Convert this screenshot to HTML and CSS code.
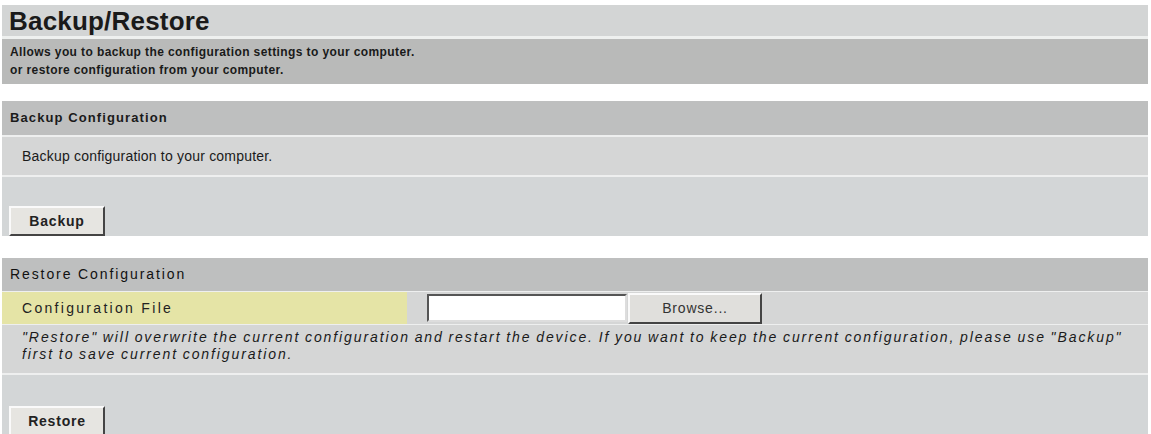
FILE: index.html
```html
<!DOCTYPE html>
<html>
<head>
	<title>Backup/Restore</title>
	<link rel="stylesheet" href="styles.css">
</head>
<body>
	<div class="page">
		<h1 class="title">Backup/Restore</h1>
		<div class="intro">
			Allows you to backup the configuration settings to your computer.<br>
			or restore configuration from your computer.
		</div>

		<div class="section">
			<div class="head">Backup Configuration</div>
			<div class="row tall">Backup configuration to your computer.</div>
			<div class="actions short">
				<button class="btn">Backup</button>
			</div>
		</div>

		<div class="section">
			<div class="head light">Restore Configuration</div>
			<div class="row field">
				<label class="label" for="cfgfile">Configuration File</label>
				<div class="file">
					<input type="text" id="cfgfile" class="filebox">
					<button class="browse">Browse...</button>
				</div>
			</div>
			<div class="row note">
				"Restore" will overwrite the current configuration and restart the device. If you want to keep the current configuration, please use "Backup" first to save current configuration.
			</div>
			<div class="actions">
				<button class="btn">Restore</button>
			</div>
		</div>
	</div>
</body>
</html>
```

FILE: styles.css
```css
body{
	margin: 0;
	background: #fff;
	font-family: "Liberation Sans", Arial, sans-serif;
	color: #1a1a1a;
}
.page{
	margin: 5px 3px 0 2px;
	width: 1146px;
}
.title{
	margin: 0;
	height: 31px;
	line-height: 32px;
	padding-left: 7px;
	font-size: 26px;
	font-weight: bold;
	letter-spacing: 0.2px;
	background: #d3d5d5;
	border-bottom: 3px solid #eef0ef;
}
.intro{
	background: #b9bab9;
	padding: 4px 8px 0;
	height: 41px;
	font-size: 12px;
	font-weight: bold;
	line-height: 18px;
	letter-spacing: 0.4px;
}
.section{
	margin-top: 17px;
}
.section + .section{
	margin-top: 22px;
}
.head{
	background: #bebfbf;
	height: 34px;
	line-height: 34px;
	padding-left: 8px;
	font-size: 13px;
	font-weight: bold;
	letter-spacing: 1.1px;
	border-bottom: 2px solid #eeefef;
}
.head.light{
	height: 33px;
	line-height: 33px;
	font-size: 14px;
	font-weight: normal;
	letter-spacing: 1.9px;
	border-bottom-width: 1px;
	color: #111;
}
.row{
	background: #d5d6d6;
	padding-left: 20px;
	height: 33px;
	line-height: 33px;
	font-size: 14px;
	letter-spacing: 0.2px;
	border-bottom: 2px solid #eeefef;
}
.row.tall{
	height: 38px;
	line-height: 38px;
}
.field{
	display: flex;
	padding: 0;
	height: 32px;
	line-height: 32px;
	border-bottom-width: 1px;
}
.label{
	width: 385px;
	padding-left: 20px;
	background: #e5e4a6;
	letter-spacing: 2.3px;
	color: #222;
}
.file{
	display: flex;
	align-items: center;
	padding-left: 20px;
}
.filebox{
	width: 196px;
	height: 24px;
	margin: 0;
	border: 2px solid #555;
	border-right-color: #ddd;
	border-bottom-color: #ddd;
	background: #fff;
	padding: 0;
}
.browse{
	width: 134px;
	height: 31px;
	margin-left: 1px;
	font-family: "Liberation Sans", Arial, sans-serif;
	font-size: 14px;
	letter-spacing: 0.8px;
	color: #333;
	background: #e0dfdc;
	border: 2px solid #fafafa;
	border-right-color: #444;
	border-bottom-color: #444;
}
.note{
	height: auto;
	line-height: 17px;
	padding: 4px 20px 10px 20px;
	font-style: italic;
	font-size: 14px;
	letter-spacing: 1.9px;
	word-spacing: -1px;
}
.actions{
	background: #d3d6d7;
	height: 61px;
	display: flex;
	align-items: flex-end;
	padding-left: 7px;
}
.actions.short{
	height: 59px;
}
.btn{
	width: 96px;
	height: 30px;
	font-family: "Liberation Sans", Arial, sans-serif;
	font-size: 14px;
	font-weight: bold;
	letter-spacing: 0.8px;
	color: #222;
	background: #e6e5e1;
	border: 2px solid #fafafa;
	border-right-color: #444;
	border-bottom-color: #444;
}
```
